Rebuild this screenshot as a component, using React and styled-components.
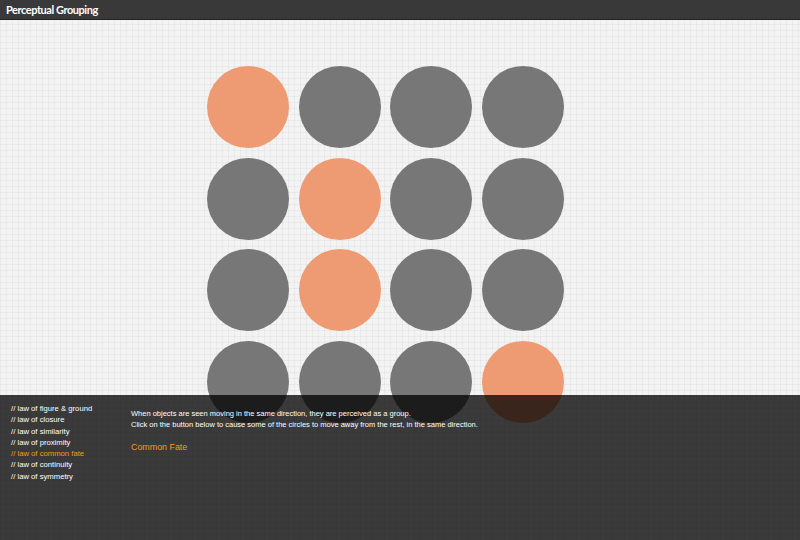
import React from "react";
import styled, { createGlobalStyle } from "styled-components";

const GlobalStyle = createGlobalStyle`
  html, body {
    margin: 0;
    padding: 0;
    height: 100%;
    overflow: hidden;
  }
  body {
    font-family: "Liberation Sans", Arial, sans-serif;
    background-color: #f3f3f3;
    background-image:
      linear-gradient(rgba(0, 0, 0, 0.035) 1px, transparent 1px),
      linear-gradient(90deg, rgba(0, 0, 0, 0.035) 1px, transparent 1px);
    background-size: 6px 6px;
  }
`;

const Page = styled.div`
  width: 800px;
  height: 540px;
  position: relative;
  overflow: hidden;
`;

const Header = styled.header`
  height: 19px;
  background: #393939;
  border-bottom: 1px solid #232323;
  color: #fff;
  font-family: Lato, "Open Sans", sans-serif;
  font-size: 11px;
  font-weight: 700;
  letter-spacing: -0.45px;
  line-height: 19px;
  padding-left: 6px;
`;

const Stage = styled.main`
  padding: 46px 0 0 207px;
`;

const CircleGrid = styled.div`
  display: grid;
  grid-template-columns: repeat(4, 82px);
  grid-auto-rows: 82px;
  column-gap: 9.5px;
  row-gap: 9.7px;
`;

const Circle = styled.div`
  border-radius: 50%;
  background: ${(p) => (p.$active ? "#ee9a72" : "#777777")};
`;

const Panel = styled.section`
  position: absolute;
  left: 0;
  right: 0;
  bottom: 0;
  height: 145px;
  background: rgba(0, 0, 0, 0.76);
  display: flex;
  color: #fff;
`;

const Nav = styled.ul`
  list-style: none;
  margin: 0;
  padding: 8px 0 0 11px;
  width: 120px;
  font-size: 7.7px;
  line-height: 11.3px;
`;

const NavItem = styled.li`
  color: ${(p) => (p.$current ? "#f39c12" : "#ffffff")};
  white-space: nowrap;
`;

const Content = styled.div`
  padding-top: 13px;
  font-size: 7.5px;
  line-height: 11.3px;
`;

const Text = styled.p`
  margin: 0;
  white-space: nowrap;
`;

const ActionButton = styled.button`
  margin-top: 11px;
  padding: 0;
  background: none;
  border: none;
  color: #f39c12;
  font-family: "Liberation Sans", Arial, sans-serif;
  font-size: 8.9px;
  cursor: pointer;
`;

const active = [0, 5, 9, 15];

const laws = [
  "law of figure & ground",
  "law of closure",
  "law of similarity",
  "law of proximity",
  "law of common fate",
  "law of continuity",
  "law of symmetry",
];

export default function App() {
  return (
    <Page>
      <GlobalStyle />
      <Header>Perceptual Grouping</Header>
      <Stage>
        <CircleGrid>
          {Array.from({ length: 16 }, (_, i) => (
            <Circle key={i} $active={active.includes(i)} />
          ))}
        </CircleGrid>
      </Stage>
      <Panel>
        <Nav>
          {laws.map((law) => (
            <NavItem key={law} $current={law === "law of common fate"}>
              // {law}
            </NavItem>
          ))}
        </Nav>
        <Content>
          <Text>
            When objects are seen moving in the same direction, they are perceived as a group.
          </Text>
          <Text>
            Click on the button below to cause some of the circles to move away from the rest, in the same direction.
          </Text>
          <ActionButton>Common Fate</ActionButton>
        </Content>
      </Panel>
    </Page>
  );
}
